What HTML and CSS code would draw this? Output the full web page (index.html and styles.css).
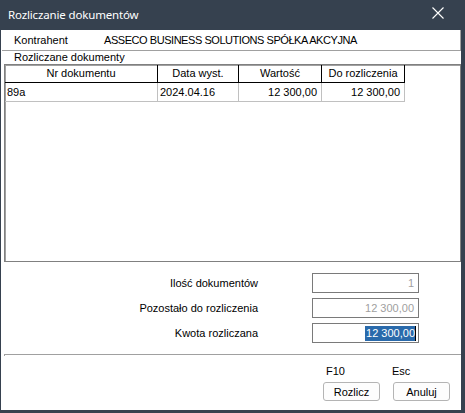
FILE: index.html
```html
<!DOCTYPE html>
<html lang="pl">
<head>
<meta charset="utf-8">
<title>Rozliczanie dokumentów</title>
<link rel="stylesheet" href="styles.css">
</head>
<body>
<div class="window">
  <div class="titlebar">
    <span class="title">Rozliczanie dokumentów</span>
    <span class="close" aria-label="Zamknij">
      <svg width="12" height="12" viewBox="0 0 12 12"><path d="M0.5 0.5 L11.5 11.5 M11.5 0.5 L0.5 11.5" stroke="#ffffff" stroke-width="1.1" fill="none"/></svg>
    </span>
  </div>
  <div class="client">
    <div class="contractor">
      <span class="c-label">Kontrahent</span>
      <span class="c-value">ASSECO BUSINESS SOLUTIONS SPÓŁKA AKCYJNA</span>
    </div>
    <div class="group-label">Rozliczane dokumenty</div>
    <div class="grid">
      <div class="row head">
        <div class="cell c1">Nr dokumentu</div>
        <div class="cell c2">Data wyst.</div>
        <div class="cell c3">Wartość</div>
        <div class="cell c4">Do rozliczenia</div>
      </div>
      <div class="row data">
        <div class="cell c1 left">89a</div>
        <div class="cell c2 left">2024.04.16</div>
        <div class="cell c3 right">12 300,00</div>
        <div class="cell c4 right">12 300,00</div>
      </div>
    </div>
    <div class="form">
      <div class="f-label">Ilość dokumentów</div>
      <div class="f-input disabled">1</div>
      <div class="f-label">Pozostało do rozliczenia</div>
      <div class="f-input disabled">12 300,00</div>
      <div class="f-label">Kwota rozliczana</div>
      <div class="f-input active"><span class="sel">12 300,00</span><span class="caret"></span></div>
    </div>
    <div class="separator"></div>
    <div class="actions">
      <div class="action">
        <span class="key">F10</span>
        <button class="btn">Rozlicz</button>
      </div>
      <div class="action">
        <span class="key">Esc</span>
        <button class="btn">Anuluj</button>
      </div>
    </div>
  </div>
</div>
</body>
</html>
```
FILE: styles.css
```css
* { box-sizing: border-box; }
html, body { margin: 0; padding: 0; }
body {
  width: 465px;
  height: 413px;
  overflow: hidden;
  font-family: "Liberation Sans", Arial, sans-serif;
  font-size: 11px;
  color: #000;
}
.window {
  width: 465px;
  height: 413px;
  background: #36414f;
  display: flex;
  flex-direction: column;
}
.titlebar {
  height: 30px;
  flex: none;
  display: flex;
  align-items: center;
  justify-content: space-between;
  padding: 0 21px 1px 8px;
  color: #ffffff;
}
.title {
  font-family: "Noto Sans", "Open Sans", sans-serif;
  font-size: 11.5px;
  letter-spacing: -0.15px;
}
.close { display: flex; margin-top: -4px; }
.client {
  flex: 1;
  margin: 0 4px 3px 1px;
  background: #ffffff;
  display: flex;
  flex-direction: column;
}
.contractor {
  margin-left: 1px;
  width: 459px;
  height: 21px;
  border-right: 1px solid #a0a0a0;
  border-bottom: 1px solid #a0a0a0;
  display: flex;
  align-items: center;
  padding-left: 12px;
}
.c-label { width: 90px; }
.c-value { letter-spacing: -0.45px; }
.group-label {
  height: 13px;
  line-height: 13px;
  padding-left: 13px;
}
.grid {
  margin-left: 3px;
  width: 457px;
  height: 198px;
  border: 1px solid #808080;
  box-shadow: inset 1px 1px 0 #a0a0a0;
}
.row { display: flex; }
.cell {
  height: 100%;
  white-space: nowrap;
  overflow: hidden;
  border-right: 1px solid #c0c0c0;
}
.c1 { width: 153px; }
.c2 { width: 81px; }
.c3 { width: 83px; }
.c4 { width: 83px; }
.head { height: 18px; }
.head .cell {
  border-right: 1px solid #000;
  border-bottom: 1px solid #000;
  text-align: center;
  line-height: 17px;
}
.data { height: 19px; }
.data .cell {
  border-bottom: 1px solid #c0c0c0;
  line-height: 18px;
}
.left { padding-left: 2px; }
.right { text-align: right; padding-right: 4px; }
.form {
  margin-top: 11px;
  display: grid;
  grid-template-columns: 257px 107px;
  column-gap: 54px;
  row-gap: 4px;
  align-items: center;
}
.f-label { text-align: right; }
.f-input {
  height: 20px;
  border: 1px solid #7a7a7a;
  text-align: right;
  padding-right: 4px;
  line-height: 18px;
}
.f-input.disabled { color: #a0a0a0; }
.f-input:nth-child(4) { margin-top: 1px; }
.f-input:nth-child(6) { margin-top: 1px; }
.f-input.active {
  padding-right: 2px;
  display: flex;
  justify-content: flex-end;
  align-items: center;
}
.sel {
  background: #2a6aab;
  color: #ffffff;
  line-height: 15px;
  padding: 0 0 0 1px;
}
.caret {
  width: 1px;
  height: 15px;
  background: #000;
}
.separator {
  margin: 11px 0 0 3px;
  height: 2px;
  border-top: 1px solid #a0a0a0;
  border-left: 1px solid #a0a0a0;
}
.actions {
  display: flex;
  justify-content: flex-end;
  gap: 13px;
  padding-right: 11px;
  margin-top: 9px;
}
.action {
  display: flex;
  flex-direction: column;
  align-items: flex-start;
}
.key {
  height: 13px;
  line-height: 13px;
  padding-left: 3px;
}
.action:last-child .key { padding-left: 0; margin-left: -1px; }
.btn {
  margin-top: 4px;
  width: 57px;
  height: 19px;
  font-family: "Liberation Sans", Arial, sans-serif;
  font-size: 11px;
  color: #000;
  background: #fdfdfd;
  border: 1px solid #b4b4b4;
  border-radius: 3px;
  padding: 0;
}
```
